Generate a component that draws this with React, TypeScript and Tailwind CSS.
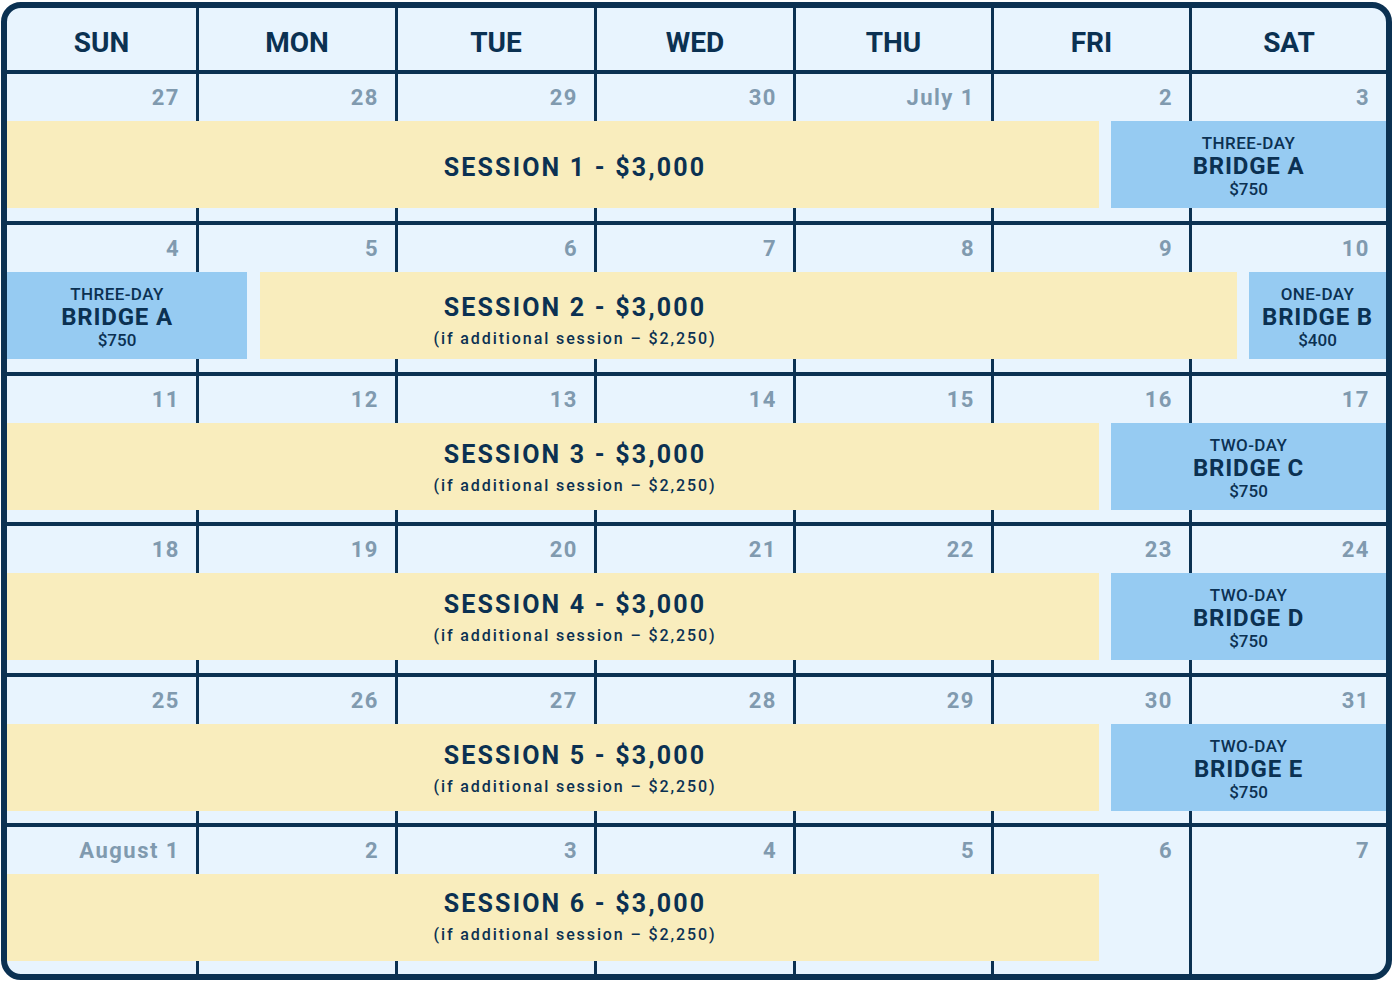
import React from 'react';

const DAYS = ['SUN', 'MON', 'TUE', 'WED', 'THU', 'FRI', 'SAT'];

// explicit placement so bars can sit over the day cells
const COL_START = ['col-start-1', 'col-start-2', 'col-start-3', 'col-start-4', 'col-start-5', 'col-start-6', 'col-start-7'];

const GRID = 'grid grid-cols-[192px_199px_199px_199px_198px_198px_194px]';

type Bar =
  | { kind: 'session'; place: string; title: string; sub?: boolean; pad: string }
  | { kind: 'bridge'; place: string; label: string; name: string; price: string; pad?: string };

type Week = { dates: string[]; height: string; bars: Bar[] };

const SUB = '(if additional session – $2,250)';

const weeks: Week[] = [
  {
    dates: ['27', '28', '29', '30', 'July 1', '2', '3'],
    height: 'h-[147px]',
    bars: [
      { kind: 'session', place: 'col-start-1 col-end-7 mr-[93px]', title: 'SESSION 1 - $3,000', pad: 'pl-[44px] justify-center pt-[6px]' },
      { kind: 'bridge', place: 'col-start-6 col-end-8 ml-[117px]', label: 'THREE-DAY', name: 'BRIDGE A', price: '$750' },
    ],
  },
  {
    dates: ['4', '5', '6', '7', '8', '9', '10'],
    height: 'h-[151px] border-t-4',
    bars: [
      { kind: 'bridge', place: 'col-start-1 col-end-3 mr-[151px]', label: 'THREE-DAY', name: 'BRIDGE A', price: '$750', pad: 'pr-[20px]' },
      { kind: 'session', place: 'col-start-2 col-end-8 ml-[61px] mr-[149px]', title: 'SESSION 2 - $3,000', sub: true, pad: 'pr-[347px] pt-[22px]' },
      { kind: 'bridge', place: 'col-start-7 col-end-8 ml-[57px]', label: 'ONE-DAY', name: 'BRIDGE B', price: '$400' },
    ],
  },
  {
    dates: ['11', '12', '13', '14', '15', '16', '17'],
    height: 'h-[150px] border-t-4',
    bars: [
      { kind: 'session', place: 'col-start-1 col-end-7 mr-[93px]', title: 'SESSION 3 - $3,000', sub: true, pad: 'pl-[44px] pt-[18px]' },
      { kind: 'bridge', place: 'col-start-6 col-end-8 ml-[117px]', label: 'TWO-DAY', name: 'BRIDGE C', price: '$750' },
    ],
  },
  {
    dates: ['18', '19', '20', '21', '22', '23', '24'],
    height: 'h-[151px] border-t-4',
    bars: [
      { kind: 'session', place: 'col-start-1 col-end-7 mr-[93px]', title: 'SESSION 4 - $3,000', sub: true, pad: 'pl-[44px] pt-[18px]' },
      { kind: 'bridge', place: 'col-start-6 col-end-8 ml-[117px]', label: 'TWO-DAY', name: 'BRIDGE D', price: '$750' },
    ],
  },
  {
    dates: ['25', '26', '27', '28', '29', '30', '31'],
    height: 'h-[150px] border-t-4',
    bars: [
      { kind: 'session', place: 'col-start-1 col-end-7 mr-[93px]', title: 'SESSION 5 - $3,000', sub: true, pad: 'pl-[44px] pt-[18px]' },
      { kind: 'bridge', place: 'col-start-6 col-end-8 ml-[117px]', label: 'TWO-DAY', name: 'BRIDGE E', price: '$750' },
    ],
  },
  {
    dates: ['August 1', '2', '3', '4', '5', '6', '7'],
    height: 'h-[151px] border-t-4',
    bars: [
      { kind: 'session', place: 'col-start-1 col-end-7 mr-[93px]', title: 'SESSION 6 - $3,000', sub: true, pad: 'pl-[44px] pt-[16px]' },
    ],
  },
];

function BarBlock({ bar }: { bar: Bar }) {
  if (bar.kind === 'bridge') {
    return (
      <div
        className={`${bar.place} row-start-2 relative z-10 bg-[#96cbf2] flex flex-col items-center justify-center pt-[4px] text-[#0b3152] ${bar.pad ?? ''}`}
      >
        <div className="text-[17px] leading-[20px] font-medium tracking-[0.4px]">{bar.label}</div>
        <div className="text-[24px] leading-[26px] font-bold tracking-[0.8px]">{bar.name}</div>
        <div className="text-[17px] leading-[21px] font-medium">{bar.price}</div>
      </div>
    );
  }
  return (
    <div
      className={`${bar.place} row-start-2 relative z-10 bg-[#f9edbd] flex flex-col items-center text-[#0b3152] ${bar.pad}`}
    >
      <div className="text-[25px] leading-[28px] font-bold tracking-[2.2px]">{bar.title}</div>
      {bar.sub && (
        <div className="mt-[6px] text-[16px] leading-[22px] font-medium tracking-[1.9px]">{SUB}</div>
      )}
    </div>
  );
}

export default function App() {
  return (
    <div className="w-[1392px] h-[982px] bg-white pt-[2px] pl-px" style={{ fontFamily: 'Roboto, "Liberation Sans", sans-serif' }}>
      <div className="w-[1391px] h-[978px] border-[6px] border-[#0b3152] rounded-[20px] overflow-hidden bg-[#e8f4fe]">
        <div className={`${GRID} h-[66px] border-b-4 border-[#0b3152]`}>
          {DAYS.map((d, i) => (
            <div
              key={d}
              className={`flex items-center justify-center pt-[8px] text-[28px] font-bold text-[#0b3152] ${i < 6 ? 'border-r-[3px] border-[#0b3152]' : ''}`}
            >
              {d}
            </div>
          ))}
        </div>

        {weeks.map((w, wi) => (
          <div key={wi} className={`${GRID} grid-rows-[47px_87px_1fr] ${w.height} border-[#0b3152]`}>
            {w.dates.map((d, i) => (
              <div
                key={i}
                className={`${COL_START[i]} row-start-1 row-span-3 ${i < 6 ? 'border-r-[3px] border-[#0b3152]' : ''}`}
              >
                <div className="h-[46px] flex items-center justify-end pr-[16px] text-[22px] font-bold tracking-[1.5px] text-[#809aaf]">
                  {d}
                </div>
              </div>
            ))}
            {w.bars.map((b, bi) => (
              <BarBlock key={bi} bar={b} />
            ))}
          </div>
        ))}
      </div>
    </div>
  );
}
